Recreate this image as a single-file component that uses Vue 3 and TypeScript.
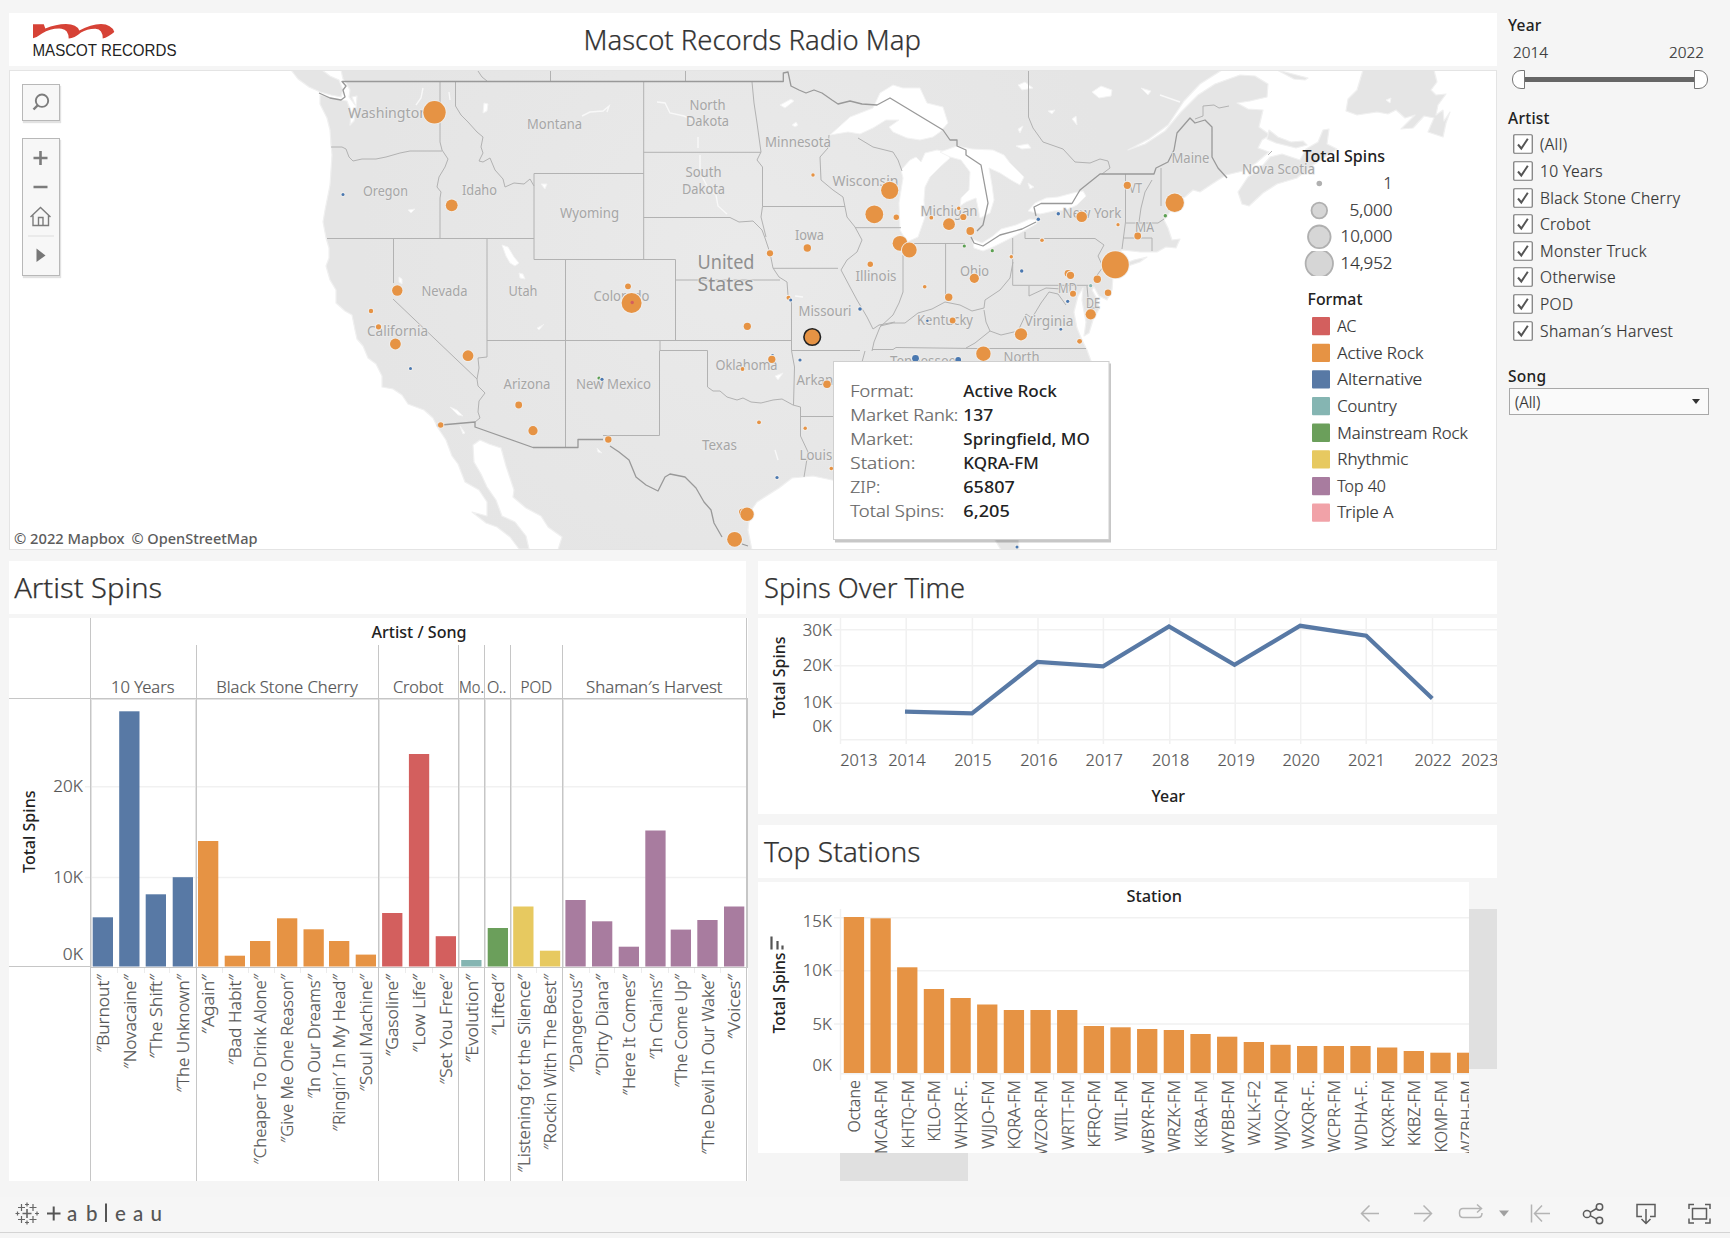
<script setup lang="ts">
interface Label { t: string; x: number; y: number; w: number }
interface Song { name: string; x: number; top: number; end: number; color: string }

const C = {
  red: '#d35f5e', orange: '#e69344', blue: '#5879a5', teal: '#85b5b2',
  green: '#6b9f5b', yellow: '#e7c960', purple: '#a87c9f', pink: '#f1a2a8',
}

const rail = [
  '(All)', '10 Years', 'Black Stone Cherry', 'Crobot', 'Monster Truck', 'Otherwise', 'POD', 'Shaman′s Harvest',
]

const formats = [
  { t: 'AC', w: 19, c: C.red }, { t: 'Active Rock', w: 86, c: C.orange }, { t: 'Alternative', w: 85, c: C.blue },
  { t: 'Country', w: 59.5, c: C.teal }, { t: 'Mainstream Rock', w: 130.5, c: C.green }, { t: 'Rhythmic', w: 71, c: C.yellow },
  { t: 'Top 40', w: 48.5, c: C.purple }, { t: 'Triple A', w: 56, c: C.pink },
]

const tip = [
  { k: 'Format:', kw: 63.5, v: 'Active Rock', vw: 93.5 },
  { k: 'Market Rank:', kw: 108, v: '137', vw: 30 },
  { k: 'Market:', kw: 63, v: 'Springfield, MO', vw: 126.5 },
  { k: 'Station:', kw: 65, v: 'KQRA-FM', vw: 75.5 },
  { k: 'ZIP:', kw: 30, v: '65807', vw: 51.5 },
  { k: 'Total Spins:', kw: 94, v: '6,205', vw: 46.5 },
]

const places: Label[] = [
  { t: 'Washington', x: 348, y: 117.7, w: 80 }, { t: 'Oregon', x: 363, y: 196.3, w: 45 }, { t: 'Idaho', x: 462, y: 194.7, w: 35 },
  { t: 'Montana', x: 527, y: 129.3, w: 55 }, { t: 'North', x: 689.5, y: 109.7, w: 36 }, { t: 'Dakota', x: 686, y: 126, w: 43 },
  { t: 'South', x: 685.5, y: 177.3, w: 36 }, { t: 'Dakota', x: 682, y: 193.7, w: 43 }, { t: 'Wyoming', x: 560, y: 218.3, w: 59 },
  { t: 'Nevada', x: 421.5, y: 296.3, w: 46 }, { t: 'Utah', x: 508.5, y: 296.3, w: 29 }, { t: 'Colorado', x: 593.5, y: 301.3, w: 56 },
  { t: 'Minnesota', x: 765, y: 146.7, w: 66 }, { t: 'Wisconsin', x: 832.5, y: 185.5, w: 66 }, { t: 'Iowa', x: 795, y: 239.5, w: 29 },
  { t: 'Illinois', x: 855.5, y: 281.3, w: 41 }, { t: 'Michigan', x: 920.5, y: 216, w: 57 }, { t: 'Ohio', x: 960, y: 276, w: 29 },
  { t: 'Missouri', x: 798.5, y: 316.3, w: 53 }, { t: 'New York', x: 1062.5, y: 218.3, w: 59 }, { t: 'VT', x: 1129, y: 193.3, w: 13 },
  { t: 'MA', x: 1135, y: 231.7, w: 19 }, { t: 'MD', x: 1058, y: 292.5, w: 19 }, { t: 'DE', x: 1086, y: 308, w: 14 },
  { t: 'Maine', x: 1171.5, y: 163, w: 38 }, { t: 'Nova Scotia', x: 1242, y: 174.3, w: 73 }, { t: 'California', x: 367, y: 335.7, w: 61 },
  { t: 'Arizona', x: 503.5, y: 389.3, w: 47 }, { t: 'New Mexico', x: 576, y: 389.3, w: 75 }, { t: 'Texas', x: 702, y: 450.3, w: 35 },
  { t: 'Oklahoma', x: 715.5, y: 370, w: 62 }, { t: 'Arkansas', x: 796.5, y: 384.7, w: 57 }, { t: 'Louisiana', x: 799.5, y: 460.3, w: 59 },
  { t: 'Kentucky', x: 917, y: 325.3, w: 56 }, { t: 'Virginia', x: 1024.5, y: 326, w: 49 }, { t: 'Tennessee', x: 890, y: 366, w: 66 },
  { t: 'North', x: 1003.5, y: 361.7, w: 36 },
]

const O = C.orange
const B = '#4a78b0'
const G = '#5ba053'
const dots: [number, number, number, string][] = [
  [434.5, 112.3, 11.2, O], [451.7, 205.3, 5.9, O], [343, 194.5, 1.5, B], [397.3, 290.5, 5.2, O], [371, 311, 2.2, O],
  [628, 286.3, 2.9, O], [631.6, 303, 10, O], [378.5, 326.8, 2.6, O], [395.4, 344, 5.4, O],
  [468, 355.7, 5.4, O], [410.5, 368.5, 1.5, B], [599, 378, 1.6, G], [602, 379.3, 1.6, B], [518.7, 405, 3.4, O],
  [533, 430.7, 4.6, O], [438.3, 425, 1.5, B], [440.7, 425, 2.7, O], [608.3, 439.5, 3.2, O], [747.3, 326.3, 3.6, O],
  [772.5, 355.7, 1.6, B], [771.8, 359.3, 3.6, O], [742.5, 369, 1.9, O], [800, 360, 1.6, B], [827, 384.3, 3.8, O],
  [759, 422.3, 1.9, O], [805.2, 428.3, 1.7, O], [831.3, 468.5, 1.8, O], [777, 477.5, 1.6, B], [742.5, 512, 3.5, O],
  [747, 514.3, 6.7, O], [734.6, 539.3, 7.4, O], [813, 175, 1.7, O], [889.7, 190.3, 8.6, O], [874.3, 214.3, 8.9, O],
  [896.3, 217.3, 2.7, O], [900, 243.3, 7.4, O], [909.3, 250, 7.4, O], [807.3, 248, 3.7, O], [770, 253.3, 3.1, O],
  [870.3, 264.3, 2.7, O], [931.3, 217.7, 1.9, O], [958.7, 208.3, 1.7, O], [963.3, 217, 3.1, O], [949, 224.2, 5.9, O],
  [970.3, 231, 3.9, O], [964.3, 246, 1.6, G], [992.3, 250.7, 1.6, G], [1011.3, 256.7, 1.7, O], [1021.7, 271, 1.7, B],
  [1042, 240.3, 1.8, O], [1038.3, 219.3, 1.7, B], [1058.3, 213.7, 1.7, B], [1081.7, 216.7, 5.3, O], [1118, 224.7, 1.6, O],
  [1127.3, 185.3, 3.6, O], [1137.7, 236, 3.4, O], [1165.3, 215.7, 1.7, G], [1174.7, 202.7, 9.2, O], [1115.3, 264.7, 13.5, O],
  [1068, 273.5, 3.4, O], [1070.5, 275.3, 3.6, O], [1097.3, 279.3, 3.7, O], [1108, 292.8, 3.2, O], [1090.7, 314.3, 5.1, O],
  [1073, 293.7, 3, O], [1090.7, 285.7, 1.6, C.teal], [1067.7, 301.3, 1.6, B], [974.3, 278.3, 4.6, O], [924.7, 286.7, 1.8, O],
  [948.7, 297.3, 3.7, O], [788.5, 297.7, 2, O], [790.7, 300, 1.5, B], [860, 309, 1.8, B], [927.4, 320.7, 1.3, B],
  [952.6, 320.5, 2.9, O], [1021, 334.3, 6.1, O], [1060.8, 329.3, 1.4, B], [1079.6, 341.3, 2.4, O], [983.4, 353.7, 7.2, O],
  [915.5, 358.3, 3.4, B], [958.2, 360, 2.9, B], [1017, 547, 1.5, B],
]

const land = [
  'M291 70L298 79 309 87 320 92 331 95 341 97 343 90 339 80 330 76 322 70H341L343 79 346 83 350 90 349 97 355 105 352 97 357 96 356 108 354 121 350 125 351 112 347 101 341 100 320 95 320 104 327 118 330 130 331 145 332 155 330 185 325 210 323 222 326 238 329 248 329 258 326 266 330 280 336 290 336 303 345 311 352 315 355 330 357 339 363 346 368 358 376 364 382 376 382 387 393 389 402 395 408 404 424 410 433 418 438 428 446 440 452 456 458 464 465 482 479 490 487 502 487 516 472 512 486 523 497 527 510 537 519 549 529 549 526 536 515 522 502 516 496 500 487 487 481 474 474 462 473 445 480 440 489 444 501 448 506 466 514 490 513 497 526 508 541 516 548 527 562 537 558 550 752 550 748 530 750 512 757 502 779 488 792 478 813 476 832 480 870 485 900 480 940 475 975 490 990 515 995 540 1001 550H1019L1018 530 1010 500 1005 480 1020 450 1050 420 1075 390 1088 372 1091 361 1087 350 1082 340 1077 328 1074 312 1078 296 1083 288 1082 300 1084 312 1086 322 1084 336 1089 333 1093 320 1099 309 1097 299 1092 290 1094 287 1099 296 1107 300 1112 290 1113 276 1112 262 1122 250 1140 252 1157 252 1166 247 1176 248 1180 239 1172 240 1168 228 1164 220 1170 212 1172 203 1185 197 1193 190 1200 192 1212 184 1226 175 1243 171 1256 163 1269 152 1258 148 1262 140 1270 135 1259 127 1263 110 1248 109 1237 103 1250 101 1267 97 1268 84 1255 76 1240 75 1215 84 1198 95 1181 112 1165 131 1145 144 1128 150 1149 139 1168 125 1184 101 1200 84 1222 70Z',
  'M1238 192L1242 204 1249 206 1263 193 1277 184 1297 178 1313 165 1325 157 1337 149 1327 144 1329 129 1323 130 1318 142 1306 149 1300 160 1282 154 1270 157 1259 170 1248 177Z',
  'M1269 130L1278 137 1291 142 1303 141 1307 145 1296 148 1276 143 1267 139Z',
  'M1277 70L1308 78 1305 80 1294 79Z',
  'M1363 70L1357 90 1348 99 1346 111 1357 115 1377 112 1388 114 1396 110 1405 118 1415 115 1401 129 1413 128 1424 116 1434 118 1428 132 1443 137 1446 123 1450 112 1444 121 1443 110 1436 115 1438 105 1446 94 1436 95 1431 90 1437 82 1434 70Z',
  'M1120 265L1134 260 1147 257 1140 262 1125 267Z',
]
const water = [
  'M830 135L850 117 873 108 880 93 893 85 903 88 920 88 927 103 943 107 948 123 940 132 933 137 920 140 907 138 893 132 889 127 899 120 886 120 873 128 860 134 848 132Z',
  'M903 178L901 170 910 160 916 157 921 162 925 153 937 150 947 152 950 158 940 167 930 177 925 187 924 200 925 217 918 237 907 242 900 230 899 203Z',
  'M940 152L957 146 972 149 993 150 1004 155 1010 163 1017 170 1024 177 1020 185 1011 180 1000 173 989 168 992 185 994 200 990 213 980 218 976 198 966 202 960 206 961 198 969 190 970 172 961 160 950 157Z',
  'M972 239L982 243 993 236 1001 229 1016 225 1030 219 1038 220 1036 224 1022 232 1007 240 993 247 983 251 974 248Z',
  'M1028 211L1035 203 1046 198 1058 197 1073 193 1083 191 1086 196 1077 205 1066 210 1054 211 1040 214Z',
  'M502 245L508 247 514 257 519 263 515 266 510 263 506 256Z',
  'M519 273L523 274 525 279 520 278Z', 'M484 103L488 104 487 111 483 113Z', 'M541 184L547 184 545 189Z',
  'M399 277L402 279 402 284 399 282Z', 'M780 105L791 99 794 101 785 108Z', 'M792 125L796 122 798 125 795 127Z',
  'M1092 92L1101 86 1112 90 1111 96 1099 98Z', 'M1141 88L1151 91 1148 95Z', 'M1018 85L1025 82 1033 88 1022 90Z',
  'M1048 111L1055 110 1052 114Z', 'M1072 119L1076 116 1077 125Z', 'M1018 129L1023 126 1020 133Z', 'M1016 146L1028 144 1031 148 1022 149Z',
  'M1028 183L1034 187 1030 189Z', 'M450 407L457 410 463 416 458 415Z', 'M460 426L465 433 463 434Z', 'M597 448L602 453 598 452Z',
  'M537 328L543 325 544 324 539 330Z', 'M775 376L783 373 778 380Z', 'M408 210L415 209 411 213Z', 'M1386 100L1391 98 1390 103Z',
]
const rivers = [
  'M657 102L665 103 670 113 684 116 693 120', 'M698 137V148M700 155V172L708 188 716 195 718 206 727 214', 'M582 116L590 112 603 111 609 106 607 112',
  'M423 88L421 98 416 105M450 100L449 92', 'M795 296L803 297M1160 95L1180 102M775 450L778 460',
]
const states = [
  'M331 147H342L346 149 349 157 353 161 362 159 370 159 376 159 386 157 400 153 410 151H442',
  'M440 81V142L442 150 448 159 445 167 439 177 437 187 441 192 440 198V238',
  'M327 238.500H534M393.500 238V283M393 299L477 379 478 386 485 393 479 401 478 412 480 418 475 422M487 238V357L478 358 479 368 477 379',
  'M455.500 81V106L461 115 468 122 477 132 483 137 481 147 483 153 479 161 483 162 490 158 495 170 503 179 505 187 514 183 524 184 530 179 534 186',
  'M534 173.500H643.700M534 173.500V259.500H675.500V340M643.700 81V259.500M643.700 152.300H761M643.700 217.500H730L739 222 753 221 762 230 765 238 770 253 773 268 779 277 787 282 788 295 791.500 303V350.500',
  'M565.500 259.500V447.500M487 340.500H791.500M675.500 280H780M660 340V350.500H707.500V387L713 391 720 391 727 397 737 400 743 398 751 402 761 403 773 400 782 399 793 405 800.500 407V436L808 452 806 465 804 477',
  'M603 435.500H659.500V350.500M791.500 350.500L794.500 367 793.500 405M791.500 350.500H860M800.500 416.500H834',
  'M752 82L754 103 757 123 761 152 757 160 762.500 167V206.500L761 217 766 237M762.500 206.500H845M829 135L828 148 820 157 821 180 833 190 843 197 847 217 855 227 862 240 857 252 847 260 841 270 850 287 857 300 867 317 873 329 879 325 895 322',
  'M773 268.300H838M855 227.700H901M903 255V292L899 303 893 315 880 327 874 342 872 351M945.600 243V300M914 243.500H965',
  'M880 326L893 323 905 323 918 313 932 309 945 302 960 305 972 311 984 308 985 300 1000 290 1010 278 1013 262M1012.700 238V285.300M1012.700 285.300H1092M1025 232V238.500H1095L1104 245 1098 256 1103 267 1095 278',
  'M872 349.500H893L896 347.500 975 348.500H1086M990 331L975 343 966 348M984 310L986 322 990 331 1001 335 1018 331 1026 314 1032 318 1041 303 1049 292 1058 294 1066 305M1029 286V296L1046 288 1062 289M1087 286L1089 308H1100M865 351L862 362',
  'M1125.500 174V222L1122 249M1126 223H1158L1164 219M1124 238H1152V251M1152 180L1145 192 1141 208 1139 222M1161 168V206M858 138L873 147 893 152 898 160 902 171',
  'M478 71L482 77 487 81M550.500 71V81M685.500 71V81M1028.500 71V117L1033 128 1043 142 1063 149 1075 162 1090 163 1100 159 1108 161 1110 168 1102 174M1195 119L1203 116V106L1214 105 1219 108 1229 106M1268 155L1272 151',
]
const nations = [
  'M319 93L330 98 341 100 345 97 343 90 346 86 342 81.500H783.300V73L788 72 791 86 799 90 806 93 814 90 822 93 832 100 838 104 850 101 862 104 877 105 890 98 943 130 950 140 957 140 957 146 966 150 966 155 981 165 988 203 983 225 977 231M971 237L974 243 983 246 1000 235 1022 229 1036 222M1036 216L1034 207 1041 203.500H1072L1080 190 1100 174H1154L1156 168 1168 162 1174 150 1177 133 1190 118 1195 123 1205 120 1212 127V157L1218 168 1227 178',
  'M441 425L475 422V427L533 447.500H578V439.500H603M610 446L619 452 629 460 636 477 646 485 658 491 665 477 670 474 685 477 696 488 704 502 711 510 714 523 722 537M742 544L748 546',
]

const songs: Song[] = [
  { name: 'Burnout', x: 93, top: 917.3, end: 1052.5, color: C.blue }, { name: 'Novacaine', x: 119.5, top: 711.3, end: 1069, color: C.blue },
  { name: 'The Shift', x: 146, top: 894.3, end: 1058.5, color: C.blue }, { name: 'The Unknown', x: 173, top: 877.2, end: 1092.5, color: C.blue },
  { name: 'Again', x: 198.3, top: 841, end: 1034, color: C.orange }, { name: 'Bad Habit', x: 225, top: 955.7, end: 1065, color: C.orange },
  { name: 'Cheaper To Drink Alone', x: 250.3, top: 941, end: 1164.5, color: C.orange }, { name: 'Give Me One Reason', x: 277.3, top: 918.3, end: 1143, color: C.orange },
  { name: 'In Our Dreams', x: 303.8, top: 929.3, end: 1098.5, color: C.orange }, { name: 'Ringin′ In My Head', x: 329.3, top: 941, end: 1131.5, color: C.orange },
  { name: 'Soul Machine', x: 356, top: 954.6, end: 1091.5, color: C.orange }, { name: 'Gasoline', x: 382.4, top: 913, end: 1056.5, color: C.red },
  { name: 'Low Life', x: 409.2, top: 754, end: 1052.5, color: C.red }, { name: 'Set You Free', x: 436, top: 936.2, end: 1084.5, color: C.red },
  { name: 'Evolution', x: 461.5, top: 960, end: 1062.5, color: C.teal }, { name: 'Lifted', x: 488, top: 928, end: 1035.5, color: C.green },
  { name: 'Listening for the Silence', x: 513.5, top: 906.5, end: 1172.5, color: C.yellow }, { name: 'Rockin With The Best', x: 540.2, top: 950.7, end: 1150, color: C.yellow },
  { name: 'Dangerous', x: 565.7, top: 900, end: 1072.5, color: C.purple }, { name: 'Dirty Diana', x: 592.3, top: 921.3, end: 1076, color: C.purple },
  { name: 'Here It Comes', x: 619, top: 946.7, end: 1095.5, color: C.purple }, { name: 'In Chains', x: 645.6, top: 830.5, end: 1059.5, color: C.purple },
  { name: 'The Come Up', x: 671, top: 929.6, end: 1087.5, color: C.purple }, { name: 'The Devil In Our Wake', x: 697.6, top: 920, end: 1154.5, color: C.purple },
  { name: 'Voices', x: 724.3, top: 906.5, end: 1039, color: C.purple },
]
const artists = [
  { t: '10 Years', x: 111, w: 63.5 }, { t: 'Black Stone Cherry', x: 216.2, w: 141.5 }, { t: 'Crobot', x: 393, w: 50.5 },
  { t: 'Mo.', x: 459, w: 25 }, { t: 'O..', x: 487, w: 19.5 }, { t: 'POD', x: 520.5, w: 31.5 }, { t: 'Shaman′s Harvest', x: 586, w: 136.5 },
]
const dividers = [196.5, 378.5, 458.5, 484.5, 510.5, 562.5]

const yearX = [840.5, 906.2, 972.4, 1038, 1103.4, 1169.8, 1235.2, 1300.7, 1366.2, 1432.5]
const yearLabels = [840.3, 888.3, 954.2, 1020.2, 1085.6, 1152, 1217.5, 1282.5, 1347.9, 1414.4, 1461.2]
const timeY = [{ t: '30K', y: 636 }, { t: '20K', y: 671 }, { t: '10K', y: 708 }, { t: '0K', y: 731.6 }]

const stations: [string, number, number][] = [
  ['Octane', 917, 1133], ['MCAR-FM', 918.3, 1154.5], ['KHTQ-FM', 967.3, 1149], ['KILO-FM', 989, 1142], ['WHXR-F..', 998, 1149.5],
  ['WJJO-FM', 1004.5, 1149.5], ['KQRA-FM', 1010, 1150], ['WZOR-FM', 1010, 1156], ['WRTT-FM', 1010, 1150.5], ['KFRQ-FM', 1026, 1148],
  ['WIIL-FM', 1027.3, 1141.5], ['WBYR-FM', 1029, 1155.5], ['WRZK-FM', 1030, 1152.5], ['KKBA-FM', 1034, 1148], ['WYBB-FM', 1036.7, 1155.5],
  ['WXLK-F2', 1042, 1146], ['WJXQ-FM', 1044.8, 1151], ['WXQR-F..', 1046, 1149.5], ['WCPR-FM', 1046, 1152.7], ['WDHA-F..', 1046, 1151],
  ['KQXR-FM', 1047.5, 1148], ['KKBZ-FM', 1051, 1146.5], ['KOMP-FM', 1052.7, 1153], ['WZBH-FM', 1052.7, 1156],
]
const stationX = (i: number) => 844 + i * 26.66
const stationY = [{ t: '15K', y: 926.8 }, { t: '10K', y: 976 }, { t: '5K', y: 1030 }, { t: '0K', y: 1070.8 }]
</script>

<template>
  <div class="page">
    <div class="body">
      <main class="main">
        <header class="head">
          <svg class="logo" width="150" height="44" viewBox="30 20 150 44">
            <path fill="#d64236" d="M33 24.300H43.800L45.300 28.600Q56 24.100 66 24.100Q77 24.300 79.300 30.600Q91 24.400 101 24.100Q111.500 24.400 114.300 32Q108 37.400 102.700 38.500Q102.900 29.400 95.500 28.700Q87 28.600 81 32.500Q74 38.500 68.700 38.400Q68.400 29.500 61.500 28.700Q51 28 42 33.500Q37 37.300 33 38.300Z" />
            <text x="32.500" y="55.700" class="brand" textLength="144" lengthAdjust="spacingAndGlyphs">MASCOT RECORDS</text>
          </svg>
          <svg class="head-title" width="344" height="46" viewBox="580 17 344 46">
            <text x="583.500" y="50" class="h" textLength="337.500" lengthAdjust="spacingAndGlyphs">Mascot Records Radio Map</text>
          </svg>
        </header>

        <section class="map">
          <svg width="1488" height="480" viewBox="9 70 1488 480">
            <defs>
              <radialGradient id="relief" gradientUnits="userSpaceOnUse" cx="740" cy="250" r="380">
                <stop offset="0" stop-color="#eaeaea" />
                <stop offset=".55" stop-color="#e7e7e7" />
                <stop offset="1" stop-color="#e5e5e5" />
              </radialGradient>
            </defs>
            <rect x="9" y="70" width="1488" height="480" fill="#fff" />
            <g class="land"><path v-for="(d, i) in land" :key="i" :d="d" /></g>
            <g class="water"><path v-for="(d, i) in water" :key="i" :d="d" /></g>
            <g class="river"><path v-for="(d, i) in rivers" :key="i" :d="d" /></g>
            <g class="state"><path v-for="(d, i) in states" :key="i" :d="d" /></g>
            <g class="nation"><path v-for="(d, i) in nations" :key="i" :d="d" /></g>
            <text v-for="(p, i) in places" :key="i" class="place" :x="p.x" :y="p.y" :textLength="p.w" lengthAdjust="spacingAndGlyphs">{{ p.t }}</text>
            <text class="place big" x="697.500" y="268.500" textLength="57" lengthAdjust="spacingAndGlyphs">United</text>
            <text class="place big" x="697.500" y="291" textLength="56" lengthAdjust="spacingAndGlyphs">States</text>
            <circle v-for="(d, i) in dots" :key="i" class="dot" :cx="d[0]" :cy="d[1]" :r="d[2]" :fill="d[3]" />
            <circle cx="632.200" cy="302.500" r="1.700" fill="#d35f5e" />
            <circle cx="812.200" cy="337" r="8.300" fill="#e69344" stroke="#222" stroke-width="1.600" />
            <text class="credit" x="14" y="543.500" textLength="110.500" lengthAdjust="spacingAndGlyphs">© 2022 Mapbox</text>
            <text class="credit" x="131.500" y="543.500" textLength="126" lengthAdjust="spacingAndGlyphs">© OpenStreetMap</text>

            <g class="legend">
              <text class="b" x="1302.500" y="161.700" textLength="82.500" lengthAdjust="spacingAndGlyphs">Total Spins</text>
              <circle cx="1319.300" cy="183.500" r="2.800" fill="#b0b0b0" />
              <g fill="#d6d6d6" stroke="#b0b0b0" stroke-width="1.800">
                <circle cx="1319.300" cy="210.500" r="7.800" />
                <circle cx="1319.300" cy="236.800" r="11.300" />
                <clipPath id="cut"><rect x="1300" y="251" width="40" height="25" /></clipPath>
                <circle cx="1319.300" cy="263.500" r="13.700" clip-path="url(#cut)" />
              </g>
              <text x="1392.500" y="189.300" text-anchor="end">1</text>
              <text x="1349.500" y="215.700" textLength="43" lengthAdjust="spacingAndGlyphs">5,000</text>
              <text x="1340.500" y="242.300" textLength="52" lengthAdjust="spacingAndGlyphs">10,000</text>
              <text x="1340.500" y="269.300" textLength="52" lengthAdjust="spacingAndGlyphs">14,952</text>
              <text class="b" x="1307.500" y="305.300" textLength="55" lengthAdjust="spacingAndGlyphs">Format</text>
              <g v-for="(f, i) in formats" :key="f.t">
                <rect x="1312" :y="317 + i * 26.65" width="18" height="18.300" rx="1" :fill="f.c" />
                <text x="1337.300" :y="332 + i * 26.63" :textLength="f.w" lengthAdjust="spacingAndGlyphs">{{ f.t }}</text>
              </g>
            </g>

            <g class="tip">
              <rect x="835" y="363.500" width="276" height="179" fill="#000" opacity=".22" />
              <rect x="833.500" y="361.500" width="275.500" height="178" fill="#fff" stroke="#cfcfcf" />
              <g v-for="(r, i) in tip" :key="r.k">
                <text class="k" x="850.300" :y="397 + i * 24" :textLength="r.kw" lengthAdjust="spacingAndGlyphs">{{ r.k }}</text>
                <text class="b" x="963.300" :y="397 + i * 24" :textLength="r.vw" lengthAdjust="spacingAndGlyphs">{{ r.v }}</text>
              </g>
            </g>
          </svg>
          <div class="tools">
            <button class="tool"><svg width="38" height="37" viewBox="0 0 38 37"><circle cx="20" cy="16.700" r="6.200" /><path d="M15.500 21.500L11.500 25.500" stroke-width="2.400" /></svg></button>
            <div class="tool group">
              <svg width="38" height="138" viewBox="0 0 38 138">
                <path d="M11.500 20h14M18.500 13v14M11.500 49h14" stroke-width="2.600" />
                <path d="M8.500 79L18.500 69.500 28.500 79M11 77.500V87.500H26.500V77.500M16.500 87V79.500H21V87" stroke-width="1.400" />
                <path d="M6 98h26" stroke="#ddd" stroke-width="1" />
                <path d="M14.500 110.500L23.500 117.500 14.500 124Z" fill="#777" stroke="none" />
              </svg>
            </div>
          </div>
        </section>

        <div class="lower">
          <section class="col left">
            <div class="title"><svg width="300" height="53" viewBox="9 561 300 53"><text class="h" x="14.200" y="598.300" textLength="148" lengthAdjust="spacingAndGlyphs">Artist Spins</text></svg></div>
            <svg class="chart" width="739" height="563" viewBox="9 618 739 563">
              <path class="grid" d="M85 786.700H748M85 877.400H748" />
              <path class="tick" d="M117.500 968v5M144.500 968v5M169.500 968v5M222.500 968v5M248.500 968v5M274.500 968v5M300.500 968v5M326.500 968v5M352.500 968v5M405.500 968v5M432.500 968v5M536.500 968v5M589.500 968v5M614.500 968v5M641.500 968v5M668.500 968v5M694.500 968v5M720.500 968v5" />
              <path class="pale" d="M91.500 699V967M195.500 699V967M379.500 699V967M459.500 699V967M485.500 699V967M511.500 699V967M563.500 699V967M91 699.500H748" />
              <rect v-for="s in songs" :key="s.name" :x="s.x - 0.3" :y="s.top" width="20.300" :height="966.5 - s.top" :fill="s.color" />
              <path class="axis" d="M90.500 618V1181M9 698.500H748M9 966.500H91M90 967.500H748M746.500 618V1181M747.500 698V967" />
              <path v-for="x in dividers" :key="x" class="axis" :d="`M${x} 645V1181`" />
              <text class="b" x="371.500" y="638" textLength="95" lengthAdjust="spacingAndGlyphs">Artist / Song</text>
              <text v-for="a in artists" :key="a.t" :x="a.x" y="692.800" :textLength="a.w" lengthAdjust="spacingAndGlyphs">{{ a.t }}</text>
              <text x="53.300" y="792" textLength="29.500" lengthAdjust="spacingAndGlyphs">20K</text>
              <text x="53.300" y="882.800" textLength="29.500" lengthAdjust="spacingAndGlyphs">10K</text>
              <text x="62.800" y="959.800" textLength="20" lengthAdjust="spacingAndGlyphs">0K</text>
              <text class="b" transform="translate(35 873) rotate(-90)" textLength="82.500" lengthAdjust="spacingAndGlyphs">Total Spins</text>
              <text v-for="s in songs" :key="s.name + 't'" :transform="`translate(${s.x + 16} ${s.end}) rotate(-90)`" :textLength="s.end - 974" lengthAdjust="spacingAndGlyphs">″{{ s.name }}″</text>
            </svg>
          </section>

          <section class="col right">
            <div class="title"><svg width="300" height="53" viewBox="758 561 300 53"><text class="h" x="764" y="598.300" textLength="201" lengthAdjust="spacingAndGlyphs">Spins Over Time</text></svg></div>
            <svg class="chart" width="739" height="196" viewBox="758 618 739 196">
              <path class="grid" d="M834 629.700H1497M834 665.700H1497M834 703.300H1497M840 739.700H1497" />
              <path v-for="x in yearX" :key="x" class="grid" :d="`M${x} 618V744`" />
              <polyline points="905,711.700 972,713.300 1037.400,662 1103.100,666.300 1169,626.500 1234.500,664.800 1300.200,625.800 1366.200,635.700 1432.300,698.500" fill="none" stroke="#5879a5" stroke-width="4.200" />
              <text v-for="t in timeY" :key="t.t" :x="t.t.length > 2 ? 802.8 : 812.5" :y="t.y" :textLength="t.t.length > 2 ? 29 : 19.2" lengthAdjust="spacingAndGlyphs">{{ t.t }}</text>
              <text v-for="(x, i) in yearLabels" :key="x" :x="x" y="765.800" textLength="37.300" lengthAdjust="spacingAndGlyphs">{{ 2013 + i }}</text>
              <text class="b" x="1151.500" y="802" textLength="33.500" lengthAdjust="spacingAndGlyphs">Year</text>
              <text class="b" transform="translate(785 718.500) rotate(-90)" textLength="82" lengthAdjust="spacingAndGlyphs">Total Spins</text>
            </svg>

            <div class="title second"><svg width="300" height="53" viewBox="758 825 300 53"><text class="h" x="764" y="862.300" textLength="156.500" lengthAdjust="spacingAndGlyphs">Top Stations</text></svg></div>
            <div class="scroll">
              <svg class="chart" width="711" height="271" viewBox="758 882 711 271">
                <path class="grid" d="M834 917.700H1469M834 970.700H1469M834 1024H1469M840.500 909V1080M840 1073.800H1469" />
                <g v-for="(s, i) in stations" :key="s[0]">
                  <path class="tick" :d="`M${stationX(i) + 23} 1074v6`" />
                  <rect :x="stationX(i) - 0.2" :y="s[1]" width="20.300" :height="1073 - s[1]" fill="#e69344" />
                  <text :transform="`translate(${stationX(i) + 16.3} ${s[2] - 0.5}) rotate(-90)`" :textLength="s[2] - 1080.7" lengthAdjust="spacingAndGlyphs">{{ s[0] }}</text>
                </g>
                <text class="b" x="1126.500" y="902" textLength="55.500" lengthAdjust="spacingAndGlyphs">Station</text>
                <text v-for="t in stationY" :key="t.t" :x="t.t.length > 2 ? 802.8 : 812.5" :y="t.y" :textLength="t.t.length > 2 ? 29 : 19.2" lengthAdjust="spacingAndGlyphs">{{ t.t }}</text>
                <text class="b" transform="translate(785 1033.500) rotate(-90)" textLength="81" lengthAdjust="spacingAndGlyphs">Total Spins</text>
                <path d="M771.500 936.500V949.500M777.500 941V949.500M782.500 945.500V949.500" stroke="#555" stroke-width="2.200" />
              </svg>
              <div class="vbar"></div>
            </div>
            <div class="hbar"></div>
          </section>
        </div>
      </main>

      <aside class="side">
        <h3>Year</h3>
        <div class="range"><span>2014</span><span>2022</span></div>
        <div class="slider"><i class="knob l"></i><i class="track"></i><i class="knob r"></i></div>
        <h3 class="artist">Artist</h3>
        <label v-for="a in rail" :key="a" class="check">
          <svg width="20" height="20" viewBox="0 0 20 20"><rect x=".750" y=".750" width="18.500" height="18.500" rx="1" fill="#fff" stroke="#777" stroke-width="1.200" /><path d="M5 10.500L8.300 14.500 14.800 4.800" fill="none" stroke="#555" stroke-width="2" /></svg>
          <span>{{ a }}</span>
        </label>
        <h3 class="song">Song</h3>
        <div class="select"><span>(All)</span><i></i></div>
      </aside>
    </div>

    <footer class="foot">
      <svg width="180" height="34" viewBox="0 1198 180 34">
        <g stroke="#666" stroke-width="1.200" fill="none">
          <path d="M22.500 1213.500h9M27 1209v9" stroke-width="1.600" />
          <path d="M18 1207.500h7M21.500 1204v7M29.500 1207.500h7M33 1204v7M18 1219.500h7M21.500 1216v7M29.500 1219.500h7M33 1216v7" />
          <path d="M25 1204.500h4M27 1202.500v4M25 1222.500h4M27 1220.500v4M15.500 1213.500h4M17.500 1211.500v4M35 1213.500h4M37 1211.500v4" />
        </g>
        <path d="M47 1213.500h13.500M53.700 1206.500v14M106 1203.500V1222" stroke="#555" stroke-width="2" />
        <text class="word" x="67 86 115 133 150.500" y="1220.500">abeau</text>
      </svg>
      <svg class="acts" width="370" height="34" viewBox="1350 1198 370 34">
        <g fill="none" stroke="#b4b4b4" stroke-width="1.500">
          <path d="M1379 1213.500H1361.500M1369.500 1205.500L1361.500 1213.500 1369.500 1221.500" />
          <path d="M1414 1213.500H1431.500M1423.500 1205.500L1431.500 1213.500 1423.500 1221.500" />
          <path d="M1467 1217.500H1463Q1459.500 1217.500 1459.500 1213.500V1212.500Q1459.500 1208.500 1463 1208.500H1481M1477 1204.500L1481.500 1208.500 1477 1212.500M1467 1217.500H1478Q1482 1217.500 1482 1213" />
          <path d="M1499 1210.500H1509L1504 1216.500Z" fill="#a0a0a0" stroke="none" />
          <path d="M1531.500 1204.500V1222.500M1550 1213.500H1534.500M1542 1205.500L1534.500 1213.500 1542 1221.500" />
        </g>
        <g fill="none" stroke="#5c5c5c" stroke-width="1.500">
          <circle cx="1587" cy="1214" r="3.600" /><circle cx="1599.500" cy="1207" r="3.200" /><circle cx="1599.500" cy="1220.500" r="3.200" />
          <path d="M1590.200 1212.300L1596.600 1208.500M1590.200 1215.700L1596.600 1219.200" />
          <path d="M1642 1216.500H1637V1204.500H1655V1216.500H1650M1646 1209V1223M1641.500 1219L1646 1223.500 1650.500 1219" />
          <rect x="1692.500" y="1208.500" width="14" height="10.500" />
          <path d="M1689 1209V1204.500H1694M1705 1204.500H1710V1209M1710 1218.500V1223H1705M1694 1223H1689V1218.500" />
        </g>
      </svg>
    </footer>
  </div>
</template>

<style>
body { background: #f5f5f5; }
</style>

<style scoped>
.page { width: 1730px; height: 1238px; overflow: hidden; background: #f5f5f5; font-family: "Noto Sans", "Open Sans", sans-serif; font-size: 15px; font-weight: 300; color: #333; }
.body { display: flex; height: 1197px; }
.main { width: 1488px; padding: 13px 0 0 9px; flex: none; }
svg { display: block; }
.head { position: relative; height: 53px; background: #fff; display: flex; justify-content: center; padding-top: 4px; box-sizing: border-box; }
.logo { position: absolute; left: 21px; top: 7px; }
.brand { font-family: "Liberation Sans", sans-serif; font-size: 16.500px; font-weight: 400; fill: #222; }
.head-title { margin-left: -2px; }
.h { font-size: 27px; font-weight: 300; fill: #333; stroke: #333; stroke-width: .25; }
.map { position: relative; height: 480px; margin-top: 4px; background: #fff; }
.map::after { content: ""; position: absolute; inset: 0; border: 1px solid #e4e4e4; pointer-events: none; }
.land { fill: url(#relief); stroke: #f0f0f0; stroke-width: 1.200; stroke-linejoin: round; }
.water { fill: #fff; stroke: #f3f3f3; stroke-width: 1; stroke-linejoin: round; }
.river { fill: none; stroke: #f8f8f8; stroke-width: 1.400; }
.state { fill: none; stroke: #b2b2b2; stroke-width: 1; stroke-linejoin: round; }
.nation { fill: none; stroke: #999; stroke-width: 1.300; stroke-linejoin: round; }
.place { font-size: 13.700px; font-weight: 400; fill: #a6a6a6; paint-order: stroke; stroke: #ebebeb; stroke-width: 1.500; }
.big { font-size: 20px; fill: #8f8f8f; }
.dot { stroke: #f0eeec; stroke-width: 1.800; paint-order: stroke; }
.credit { font-size: 13.500px; font-weight: 500; fill: #5c5c5c; }
.legend text, .chart text { font-size: 15.700px; font-weight: 300; fill: #333; stroke: #333; stroke-width: .2; }
.chart text { fill: #555; stroke: #555; }
.chart text.b, .legend text.b, .tip text.b { font-weight: 500; fill: #222; stroke: none; }
.tip text { font-size: 16px; }
.tip .k { fill: #666; font-weight: 300; stroke: #666; stroke-width: .2; }
.tools { position: absolute; left: 13px; top: 14px; display: flex; flex-direction: column; gap: 17px; }
.tool { width: 38px; height: 37px; padding: 0; margin: 0; box-sizing: border-box; background: #f7f7f7; border: 1px solid #b8b8b8; box-shadow: 1px 2px 1px #e2e2e2; }
.tool svg { margin: -1px; fill: none; stroke: #7c7c7c; stroke-width: 1.900; }
.group { height: 138px; }
.lower { display: flex; gap: 10px; margin-top: 11px; }
.col { width: 739px; }
.title { height: 53px; background: #fff; margin-bottom: 4px; }
.left .title { width: 737px; }
.second { margin-top: 11px; }
.chart { background: #fff; }
.grid { fill: none; stroke: #f1f1f1; stroke-width: 1.500; }
.tick { stroke: #ececec; stroke-width: 1; }
.pale { fill: none; stroke: #e3e3e3; stroke-width: 1; }
.axis { fill: none; stroke: #c6c6c6; stroke-width: 1; }
.scroll { display: flex; }
.vbar { width: 28px; height: 160px; margin-top: 27px; background: #e0e0e0; }
.hbar { width: 128px; height: 28px; margin-left: 82px; background: #e0e0e0; }
.side { width: 201px; padding: 13px 0 0 11px; }
.side span { -webkit-text-stroke: .2px #333; }
.side h3 { margin: 0; font-size: 15.500px; font-weight: 500; line-height: 24px; color: #222; letter-spacing: .25px; }
.range { display: flex; justify-content: space-between; padding: 0 5px 0 5px; margin-top: 3px; line-height: 24px; font-size: 15.300px; }
.slider { display: flex; align-items: center; height: 19px; margin: 6px 0 0 4px; width: 196px; }
.knob { box-sizing: border-box; width: 13px; height: 19px; background: #fff; border: 1px solid #777; }
.knob.l { border-radius: 9px 0 0 9px; }
.knob.r { width: 14px; border-radius: 0 9px 9px 0; }
.track { flex: 1; height: 5px; background: #666; }
.side .artist { margin-top: 17px; height: 25.200px; }
.check { display: flex; align-items: center; height: 26.600px; padding-left: 5px; gap: 7px; letter-spacing: .4px; font-size: 15.600px; }
.side .song { margin-top: 20.500px; }
.select { display: flex; align-items: center; justify-content: space-between; box-sizing: border-box; width: 200px; height: 27px; margin: 0 0 0 1px; padding: 0 8px 0 5px; background: #fafafa; border: 1px solid #a8a8a8; font-size: 15.500px; }
.select i { border: 4px solid transparent; border-top: 5px solid #333; border-bottom: 0; }
.foot { display: flex; justify-content: space-between; height: 36px; box-sizing: border-box; padding-top: 1px; padding-right: 10px; background: #f6f6f6; border-bottom: 1px solid #d4d4d4; }
.word { font-family: Lato, sans-serif; font-size: 20.500px; font-weight: 500; fill: #555; }
</style>
